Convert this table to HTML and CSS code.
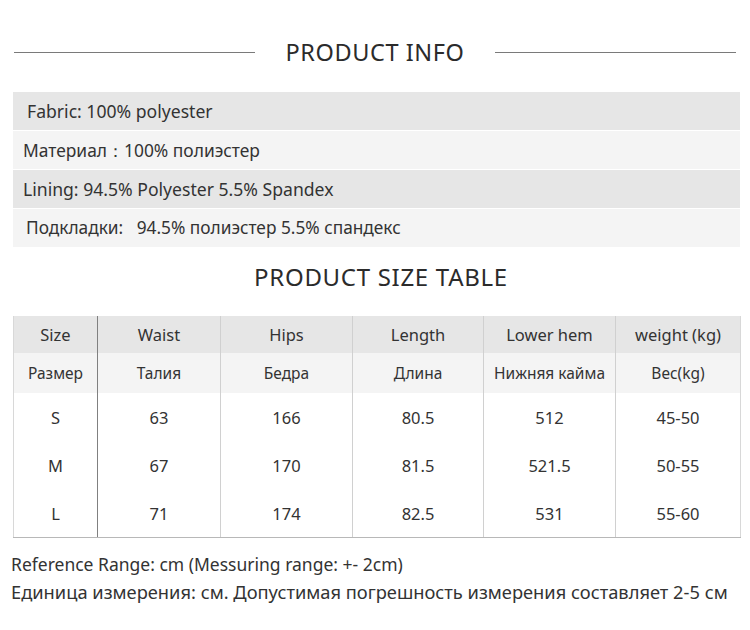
FILE: index.html
```html
<!DOCTYPE html>
<html>
<head>
<meta charset="utf-8">
<link rel="stylesheet" href="styles.css">
</head>
<body>
<div class="page">
  <div class="head">
    <span class="rule"></span>
    <h1 class="title">PRODUCT INFO</h1>
    <span class="rule"></span>
  </div>
  <div class="info">
    <div class="row dark r1">Fabric: 100% polyester</div>
    <div class="row light r2">Материал：100% полиэстер</div>
    <div class="row dark r3">Lining: 94.5% Polyester 5.5% Spandex</div>
    <div class="row light r4">Подкладки:&nbsp;&nbsp;&nbsp;94.5% полиэстер 5.5% спандекс</div>
  </div>
  <h2 class="title2">PRODUCT SIZE TABLE</h2>
  <table class="size">
    <colgroup>
      <col class="c1"><col class="c2"><col class="c3"><col class="c4"><col class="c5"><col class="c6">
    </colgroup>
    <tr class="h1r"><td>Size</td><td>Waist</td><td>Hips</td><td>Length</td><td>Lower hem</td><td>weight (kg)</td></tr>
    <tr class="h2r"><td>Размер</td><td>Талия</td><td>Бедра</td><td>Длина</td><td>Нижняя кайма</td><td>Вес(kg)</td></tr>
    <tr class="br"><td>S</td><td>63</td><td>166</td><td>80.5</td><td>512</td><td>45-50</td></tr>
    <tr class="br"><td>M</td><td>67</td><td>170</td><td>81.5</td><td>521.5</td><td>50-55</td></tr>
    <tr class="br last"><td>L</td><td>71</td><td>174</td><td>82.5</td><td>531</td><td>55-60</td></tr>
  </table>
  <div class="notes">
    <p class="n1">Reference Range: cm (Messuring range: +- 2cm)</p>
    <p class="n2">Единица измерения: см. Допустимая погрешность измерения составляет 2-5 см</p>
  </div>
</div>
</body>
</html>
```
FILE: styles.css
```css
html, body { margin: 0; padding: 0; background: #fff; }
body { font-family: "Noto Sans", "Open Sans", sans-serif; color: #333; }
.page { width: 750px; }
.head {
  display: flex; align-items: center; gap: 30px;
  padding: 30px 14px 0 14px; height: 44px; margin-bottom: 18px;
}
.rule { flex: 1; height: 1px; background: #7a7a7a; }
.title {
  margin: 0; font-weight: 400; font-size: 23.5px; line-height: 44px;
  letter-spacing: 0.6px; color: #2b2b2b;
}
.info { margin: 0 10px 0 13px; display: flex; flex-direction: column; gap: 1px; }
.row { height: 38px; line-height: 38px; padding-left: 10px; color: #333; }
.row.dark { background: #e6e6e6; }
.row.light { background: #f4f4f4; }
.r1 { padding-left: 14px; font-size: 17.6px; }
.r2 { font-size: 17.4px; }
.r3 { font-size: 17.6px; }
.r4 { padding-left: 13px; font-size: 17.3px; }
.title2 {
  margin: 10px 0 19px; padding-left: 12px; text-align: center; font-weight: 400; font-size: 24px;
  line-height: 40px; letter-spacing: 0.7px; color: #2b2b2b;
}
.size {
  margin-left: 13px; width: 727px; border-collapse: collapse; table-layout: fixed;
  border-left: 1px solid #d8d8d8; border-right: 1px solid #d8d8d8;
  font-size: 16.5px;
}
.c1 { width: 84px; } .c2 { width: 123px; } .c3 { width: 132px; }
.c4 { width: 131px; } .c5 { width: 132px; } .c6 { width: 125px; }
.size td { text-align: center; padding: 0; border-left: 1px solid #d0d0d0; color: #333; }
.size td:first-child { border-left: none; border-right: 1px solid #808080; }
.size td:nth-child(2) { border-left: 1px solid #808080; }
.h1r td { background: #e6e6e6; height: 37px; }
.h2r td { background: #f4f4f4; height: 40px; font-size: 15.5px; }
.br td { height: 48px; }
.last td { border-bottom: 1px solid #b8b8b8; }
.notes { padding: 13px 0 0 11px; }
.notes p { margin: 0; }
.n1 { font-size: 17.5px; line-height: 27px; }
.n2 { font-size: 18.3px; line-height: 27px; }
```
